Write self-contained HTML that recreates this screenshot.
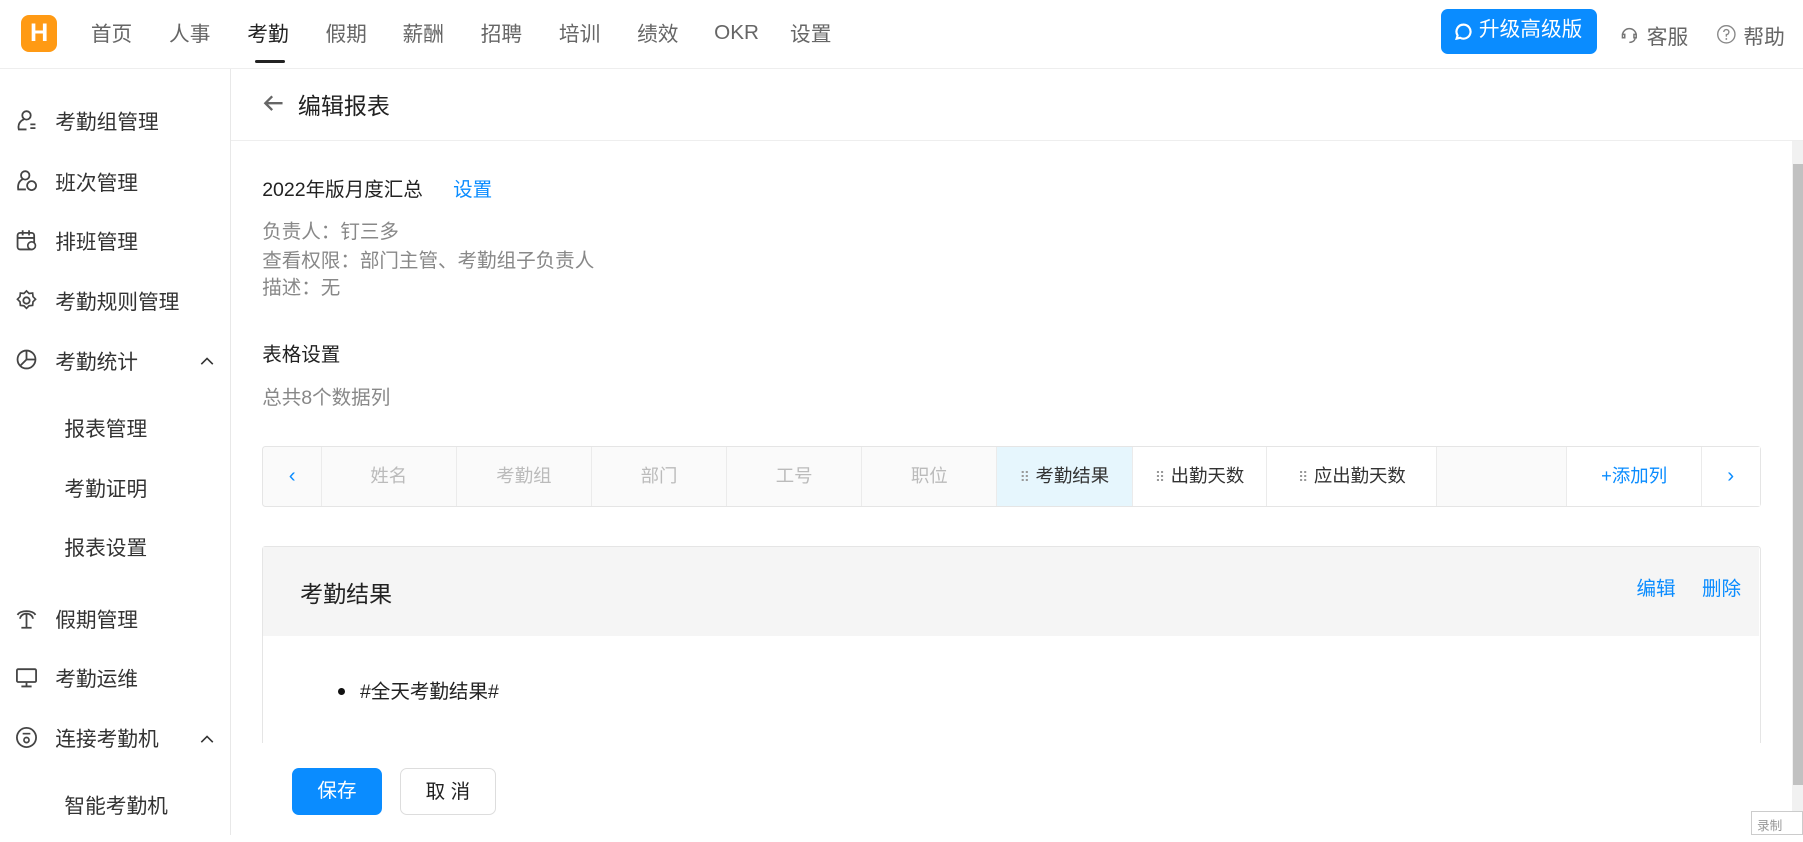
<!DOCTYPE html>
<html><head><meta charset="utf-8">
<style>
html{zoom:1.15}
body{margin:0;width:1568px;height:726px;overflow:hidden;background:#fff;font-family:"Liberation Sans","Noto Sans CJK SC",sans-serif;color:#333;position:relative}
.a{position:absolute;white-space:nowrap}
.top{left:0;top:0;width:1568px;height:59px;border-bottom:1px solid #eee}
.logo{left:18px;top:13px;width:32px;height:32px;background:#ff9a14;border-radius:7px;color:#fff;font-weight:bold;font-size:22px;text-align:center;line-height:32px}
.nav{top:15px;font-size:18px;color:#666}
.side{left:0;top:60px;width:200px;height:666px;border-right:1px solid #e8e8e8}
.si{font-size:18px;color:#333;left:48px}
.sub{font-size:18px;color:#333;left:56px}
.ic{left:13px;width:20px;height:20px}
.g{color:#888;font-size:17px;left:228px}
.cell{top:389px;height:51px;border-right:1px solid #ebebeb;box-sizing:border-box;text-align:center;line-height:51px;font-size:16px;color:#bbb}
.dk{color:#333}
.dots{color:#999;font-size:12px;letter-spacing:-1px;margin-right:6px}
.btn{top:668px;height:41px;border-radius:6px;line-height:41px;text-align:center;font-size:17px}
</style></head><body>
<div class="a top"></div>
<div class="a logo">H</div>
<div class="a nav" style="left:79px">首页</div>
<div class="a nav" style="left:147px">人事</div>
<div class="a nav" style="left:215px;color:#222">考勤</div>
<div class="a" style="left:222px;top:52px;width:26px;height:3px;border-radius:2px;background:#222"></div>
<div class="a nav" style="left:283px">假期</div>
<div class="a nav" style="left:350px">薪酬</div>
<div class="a nav" style="left:418px">招聘</div>
<div class="a nav" style="left:486px">培训</div>
<div class="a nav" style="left:554px">绩效</div>
<div class="a nav" style="left:621px;top:18px">OKR</div>
<div class="a nav" style="left:687px">设置</div>
<div class="a" style="left:1253px;top:8px;width:136px;height:39px;background:#0a8cff;border-radius:6px;color:#fff;font-size:18px;line-height:37px">
<svg style="position:absolute;left:12px;top:12px" width="15" height="15" viewBox="0 0 16 16"><path d="M8 1.5a6.5 6.5 0 1 1-3.2 12.2L1.5 14.5l.9-3A6.5 6.5 0 0 1 8 1.5z" fill="none" stroke="#fff" stroke-width="2"/></svg>
<span style="position:absolute;left:33px">升级高级版</span></div>
<svg class="a" style="left:1408px;top:21px" width="18" height="18" viewBox="0 0 18 18"><path d="M3 10a6 6 0 0 1 12 0M3 9v3h2V9zM13 9v3h2V9zM14 12c0 3-3 4-5 4" fill="none" stroke="#777" stroke-width="1.3"/></svg>
<div class="a nav" style="left:1432px;top:17px">客服</div>
<svg class="a" style="left:1492px;top:21px" width="18" height="18" viewBox="0 0 18 18"><circle cx="9" cy="9" r="7.5" fill="none" stroke="#888" stroke-width="1.2"/><path d="M6.8 7a2.2 2.2 0 1 1 2.2 2.2V11" fill="none" stroke="#888" stroke-width="1.2"/><circle cx="9" cy="13" r=".8" fill="#888"/></svg>
<div class="a nav" style="left:1516px;top:17px">帮助</div>

<div class="a side"></div>
<svg class="a ic" style="top:95px" viewBox="0 0 18 18"><path d="M7 8C4 9.5 2 12 3 16h6M12 12h4M12 15h4" fill="none" stroke="#444" stroke-width="1.4"/><circle cx="9" cy="5" r="3.3" fill="none" stroke="#444" stroke-width="1.4"/></svg>
<div class="a si" style="top:91px">考勤组管理</div>
<svg class="a ic" style="top:147px" viewBox="0 0 18 18"><circle cx="8" cy="5" r="3.3" fill="none" stroke="#444" stroke-width="1.4"/><path d="M6 8C3 9.5 2 12 2.5 16h6" fill="none" stroke="#444" stroke-width="1.4"/><circle cx="13" cy="13" r="3.5" fill="none" stroke="#444" stroke-width="1.4"/></svg>
<div class="a si" style="top:144px">班次管理</div>
<svg class="a ic" style="top:199px" viewBox="0 0 18 18"><rect x="2" y="3" width="13" height="13" rx="2" fill="none" stroke="#444" stroke-width="1.4"/><path d="M2 7h13M6 1v4M11 1v4" stroke="#444" stroke-width="1.4"/><circle cx="13" cy="13" r="3" fill="#fff" stroke="#444" stroke-width="1.3"/></svg>
<div class="a si" style="top:196px">排班管理</div>
<svg class="a ic" style="top:251px" viewBox="0 0 18 18"><circle cx="9" cy="9" r="2.5" fill="none" stroke="#444" stroke-width="1.4"/><path d="M9 1.5l2 2 2.8-.3.3 2.8 2 2-2 2 -.3 2.8-2.8.3-2 2-2-2-2.8-.3-.3-2.8-2-2 2-2 .3-2.8 2.8.3z" fill="none" stroke="#444" stroke-width="1.3"/></svg>
<div class="a si" style="top:248px">考勤规则管理</div>
<svg class="a ic" style="top:303px" viewBox="0 0 18 18"><circle cx="9" cy="9" r="7" fill="none" stroke="#444" stroke-width="1.4"/><path d="M9 2v7h7M9 9l-5 5" fill="none" stroke="#444" stroke-width="1.4"/></svg>
<div class="a si" style="top:300px">考勤统计</div>
<svg class="a" style="left:173px;top:309px" width="14" height="10" viewBox="0 0 14 10"><path d="M2 8l5-5 5 5" fill="none" stroke="#333" stroke-width="1.4"/></svg>
<div class="a sub" style="top:358px">报表管理</div>
<div class="a sub" style="top:410px">考勤证明</div>
<div class="a sub" style="top:462px">报表设置</div>
<svg class="a ic" style="top:527px" viewBox="0 0 18 18"><path d="M9 6v11M2 7c2-4 12-4 14 0M9 6c-3 0-5 2-5 4M9 6c3 0 5 2 5 4M5 17h8" fill="none" stroke="#444" stroke-width="1.4"/></svg>
<div class="a si" style="top:524px">假期管理</div>
<svg class="a ic" style="top:579px" viewBox="0 0 18 18"><rect x="1.5" y="2.5" width="15" height="10" rx="1" fill="none" stroke="#444" stroke-width="1.4"/><path d="M5 16h8M9 13v3" stroke="#444" stroke-width="1.4"/></svg>
<div class="a si" style="top:576px">考勤运维</div>
<svg class="a ic" style="top:631px" viewBox="0 0 18 18"><circle cx="9" cy="9" r="7.5" fill="none" stroke="#444" stroke-width="1.4"/><circle cx="9" cy="11" r="2" fill="none" stroke="#444" stroke-width="1.3"/><path d="M6 6h6" stroke="#444" stroke-width="1.3"/></svg>
<div class="a si" style="top:628px">连接考勤机</div>
<svg class="a" style="left:173px;top:637px" width="14" height="10" viewBox="0 0 14 10"><path d="M2 8l5-5 5 5" fill="none" stroke="#333" stroke-width="1.4"/></svg>
<div class="a sub" style="top:686px">智能考勤机</div>

<svg class="a" style="left:229px;top:82px" width="18" height="16" viewBox="0 0 18 16"><path d="M17 8H2M8 2L2 8l6 6" fill="none" stroke="#666" stroke-width="2"/></svg>
<div class="a" style="left:259px;top:76px;font-size:20px;color:#222">编辑报表</div>
<div class="a" style="left:201px;top:122px;width:1367px;border-top:1px solid #eee"></div>
<div class="a" style="left:1558px;top:123px;width:10px;height:603px;background:#f1f1f1"></div>
<div class="a" style="left:1559px;top:143px;width:9px;height:540px;background:#c1c1c1"></div>

<div class="a" style="left:228px;top:150px;font-size:17px;color:#222">2022年版月度汇总</div>
<div class="a" style="left:394px;top:150px;font-size:17px;color:#0a8cff">设置</div>
<div class="a g" style="top:187px">负责人：钉三多</div>
<div class="a g" style="top:212px">查看权限：部门主管、考勤组子负责人</div>
<div class="a g" style="top:236px">描述：无</div>
<div class="a" style="left:228px;top:294px;font-size:17px;color:#222">表格设置</div>
<div class="a g" style="top:331px">总共8个数据列</div>

<div class="a" style="left:228px;top:388px;width:1302px;height:51px;border:1px solid #e5e5e5;background:#fafafa;border-radius:3px"></div>
<div class="a cell" style="left:229px;width:51px;color:#0a8cff;font-size:18px">&lsaquo;</div>
<div class="a cell" style="left:280px;width:117px">姓名</div>
<div class="a cell" style="left:397px;width:118px">考勤组</div>
<div class="a cell" style="left:515px;width:117px">部门</div>
<div class="a cell" style="left:632px;width:118px">工号</div>
<div class="a cell" style="left:750px;width:117px">职位</div>
<div class="a cell dk" style="left:867px;width:118px;background:#e6f6fd"><span class="dots">⠿</span>考勤结果</div>
<div class="a cell dk" style="left:985px;width:117px;background:#fff"><span class="dots">⠿</span>出勤天数</div>
<div class="a cell dk" style="left:1102px;width:148px;background:#fff"><span class="dots">⠿</span>应出勤天数</div>
<div class="a cell" style="left:1362px;width:118px;border-left:1px solid #ebebeb;color:#0a8cff;background:#fff">+添加列</div>
<div class="a cell" style="left:1480px;width:50px;color:#0a8cff;font-size:18px;border:none;background:#fff">&rsaquo;</div>

<div class="a" style="left:228px;top:475px;width:1302px;height:200px;border:1px solid #e5e5e5;border-radius:3px"></div>
<div class="a" style="left:229px;top:476px;width:1301px;height:77px;background:#f5f5f5"></div>
<div class="a" style="left:261px;top:500px;font-size:20px;color:#222">考勤结果</div>
<div class="a" style="left:1423px;top:497px;font-size:17px;color:#0a8cff">编辑</div>
<div class="a" style="left:1480px;top:497px;font-size:17px;color:#0a8cff">删除</div>
<div class="a" style="left:294px;top:598px;width:6px;height:6px;border-radius:50%;background:#111"></div>
<div class="a" style="left:313px;top:587px;font-size:17px;color:#222">#全天考勤结果#</div>
<div class="a" style="left:201px;top:646px;width:1357px;height:80px;background:#fff"></div>
<div class="a btn" style="left:254px;width:78px;background:#0a8cff;color:#fff">保存</div>
<div class="a btn" style="left:348px;width:83px;border:1px solid #ddd;box-sizing:border-box;color:#222">取 消</div>
<div class="a" style="left:1523px;top:705px;width:45px;height:21px;border:1px solid #ccc;background:#fff;font-size:11px;color:#999;line-height:26px;padding-left:4px;box-sizing:border-box">录制</div>
</body></html>
